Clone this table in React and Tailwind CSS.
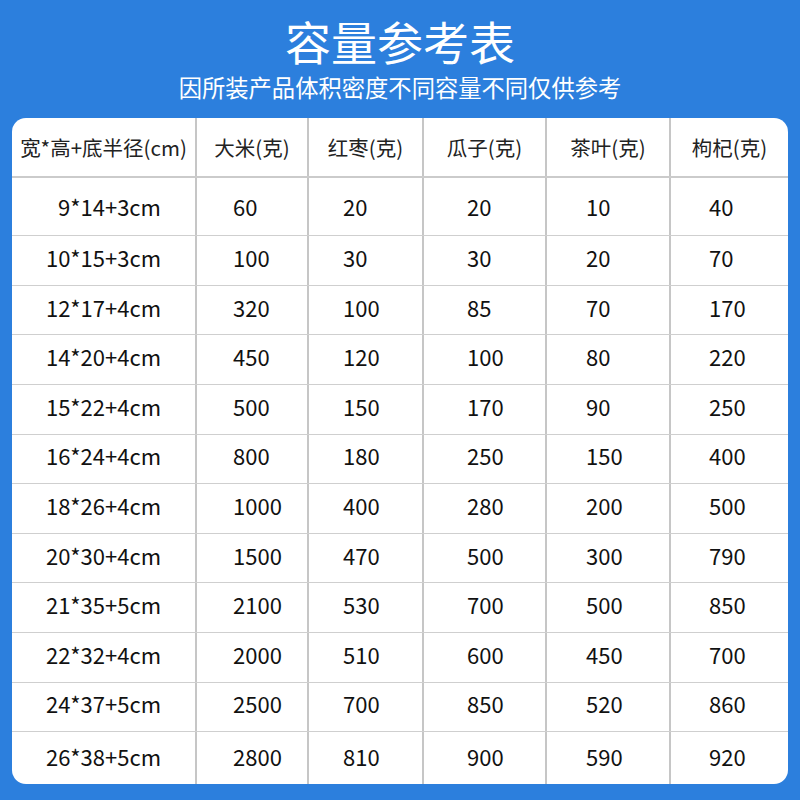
const rows = [
  ['9*14+3cm', '60', '20', '20', '10', '40'],
  ['10*15+3cm', '100', '30', '30', '20', '70'],
  ['12*17+4cm', '320', '100', '85', '70', '170'],
  ['14*20+4cm', '450', '120', '100', '80', '220'],
  ['15*22+4cm', '500', '150', '170', '90', '250'],
  ['16*24+4cm', '800', '180', '250', '150', '400'],
  ['18*26+4cm', '1000', '400', '280', '200', '500'],
  ['20*30+4cm', '1500', '470', '500', '300', '790'],
  ['21*35+5cm', '2100', '530', '700', '500', '850'],
  ['22*32+4cm', '2000', '510', '600', '450', '700'],
  ['24*37+5cm', '2500', '700', '850', '520', '860'],
  ['26*38+5cm', '2800', '810', '900', '590', '920']
]

const headers = ['宽*高+底半径(cm)', '大米(克)', '红枣(克)', '瓜子(克)', '茶叶(克)', '枸杞(克)']

// left padding for the value columns, measured from the picture
const pads = ['', 'pl-[36px]', 'pl-[34px]', 'pl-[43px]', 'pl-[39px]', 'pl-[38px]']

const gridCols = 'grid grid-cols-[183px_112px_115px_123px_124px_119px]'

function rowHeight(i) {
  if (i === 0) return 'h-[57px]'
  if (i === rows.length - 1) return 'flex-1'
  return 'h-[49.6px]'
}

function cellPad(i) {
  if (i === 0) return ''
  if (i === rows.length - 1) return 'pb-[4px]'
  return 'pb-[6px]'
}

export default function App() {
  return (
    <div className="flex h-[800px] w-[800px] flex-col bg-[#2c7fdd] font-['Noto_Sans_CJK_SC','Noto_Sans',sans-serif]">
      <div className="flex flex-col items-center pt-[17px]">
        <h1 className="text-[46px] leading-none font-normal text-white">容量参考表</h1>
        <p className="mt-[13px] text-[23.3px] leading-none text-white">因所装产品体积密度不同容量不同仅供参考</p>
      </div>

      <div className="mx-3 mt-[19px] mb-4 flex flex-1 flex-col overflow-hidden rounded-[14px] bg-white">
        <div className={`${gridCols} h-[60px] border-b-2 border-[#cbcbcb]`}>
          {headers.map((h, j) => (
            <div
              key={h}
              className={`flex items-center justify-center text-[20.5px] text-[#222] ${j > 0 ? 'border-l-2 border-[#c6c6c6]' : ''}`}
            >
              {h}
            </div>
          ))}
        </div>

        {rows.map((r, i) => (
          <div
            key={r[0]}
            className={`${gridCols} ${rowHeight(i)} ${i > 0 ? 'border-t border-[#cfcfcf]' : ''}`}
          >
            {r.map((v, j) => (
              <div
                key={j}
                className={`flex items-center text-[22px] text-[#111] ${cellPad(i)} ${
                  j === 0
                    ? `justify-center ${i === 0 ? 'pl-[12px]' : ''}`
                    : `border-l-2 border-[#c6c6c6] ${pads[j]}`
                }`}
              >
                {v}
              </div>
            ))}
          </div>
        ))}
      </div>
    </div>
  )
}
